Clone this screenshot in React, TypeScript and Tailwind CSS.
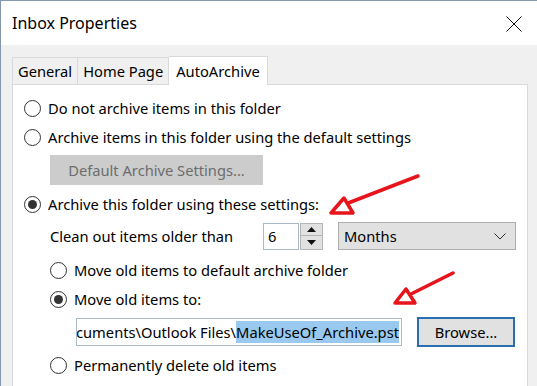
import React from "react";

const font = { fontFamily: '"Noto Sans", "Liberation Sans", sans-serif' };

function Radio({ checked, label }: { checked?: boolean; label: string }) {
  return (
    <div className="flex items-center h-[29px]">
      <div className="w-[17px] h-[17px] rounded-full border border-[#333333] bg-white flex items-center justify-center shrink-0">
        {checked && <div className="w-[9px] h-[9px] rounded-full bg-[#333333]" />}
      </div>
      <span className="ml-[7px] text-[14.7px] text-black whitespace-nowrap">{label}</span>
    </div>
  );
}

export default function App() {
  return (
    <div
      className="relative w-[537px] h-[386px] overflow-hidden bg-[#f0f0f0] border-l border-t border-[#8497ad]"
      style={font}
    >
      {/* Title bar */}
      <div className="h-[44px] bg-white flex items-center justify-between pl-[11px] pr-[15px]">
        <span className="text-[16px] text-black">Inbox Properties</span>
        <svg width="16" height="16" viewBox="0 0 16 16" className="mt-[1px]">
          <path d="M0.5 0.5 L15.5 15.5 M15.5 0.5 L0.5 15.5" stroke="#111" strokeWidth="1" fill="none" />
        </svg>
      </div>

      <div className="pl-[11px] pt-[10px]">
        {/* Tabs */}
        <div className="flex items-end h-[29px]">
          <div className="h-[27px] px-[5px] border border-b-0 border-[#d9d9d9] bg-[#f0f0f0] flex items-center text-[14.7px]">
            General
          </div>
          <div className="h-[27px] px-[5px] border border-b-0 border-l-0 border-[#d9d9d9] bg-[#f0f0f0] flex items-center text-[14.7px]">
            Home Page
          </div>
          <div className="h-[29px] px-[7px] border border-b-0 border-l-0 border-[#d9d9d9] bg-white flex items-center text-[14.7px] relative z-10 -mb-[1px]">
            AutoArchive
          </div>
        </div>

        {/* Panel */}
        <div className="w-[516px] h-[320px] bg-white border border-[#d9d9d9] pl-[11px] pt-[9px]">
          <Radio label="Do not archive items in this folder" />
          <Radio label="Archive items in this folder using the default settings" />
          <div className="ml-[26px] mt-[3px] w-[213px] h-[30px] bg-[#cccccc] flex items-center justify-center text-[14.7px] text-[#6d6d6d]">
            Default Archive Settings...
          </div>
          <div className="mt-[5px]">
            <Radio checked label="Archive this folder using these settings:" />
          </div>

          <div className="ml-[26px] mt-[3px] flex items-center h-[28px]">
            <span className="w-[213px] text-[14.7px]">Clean out items older than</span>
            <div className="w-[36px] h-[27px] border border-[#a9b8c9] bg-white flex items-center pl-[4px] text-[14.7px]">
              6
            </div>
            <div className="ml-[1px] w-[23px] h-[27px] flex flex-col">
              <div className="h-[13px] bg-[#e1e1e1] border border-[#b5b5b5] flex items-center justify-center">
                <svg width="9" height="5" viewBox="0 0 9 5"><path d="M0 5 L4.5 0 L9 5 Z" fill="#111" /></svg>
              </div>
              <div className="h-[14px] bg-[#e1e1e1] border border-t-0 border-[#b5b5b5] flex items-center justify-center">
                <svg width="9" height="5" viewBox="0 0 9 5"><path d="M0 0 L4.5 5 L9 0 Z" fill="#111" /></svg>
              </div>
            </div>
            <div className="ml-[15px] w-[178px] h-[28px] bg-[#e1e1e1] border border-[#adadad] flex items-center justify-between pl-[5px] pr-[9px] text-[14.7px]">
              <span>Months</span>
              <svg width="12" height="7" viewBox="0 0 12 7">
                <path d="M0.5 0.5 L6 6 L11.5 0.5" stroke="#333" strokeWidth="1" fill="none" />
              </svg>
            </div>
          </div>

          <div className="ml-[26px] mt-[6px]">
            <Radio label="Move old items to default archive folder" />
            <Radio checked label="Move old items to:" />
            <div className="mt-[4px] flex items-center h-[28px]">
              <div className="ml-[26px] w-[326px] h-[28px] border border-[#a9b8c9] bg-white flex items-center justify-end overflow-hidden pr-[2px] text-[14.7px] whitespace-nowrap">
                <span>C:\Users\user\Documents\Outlook Files\</span>
                <span className="bg-[#99c9ef]">MakeUseOf_Archive.pst</span>
              </div>
              <div className="ml-[15px] w-[98px] h-[30px] bg-[#e1e1e1] border-2 border-[#2a6db0] flex items-center justify-center text-[14.7px]">
                Browse...
              </div>
            </div>
            <div className="mt-[5px]">
              <Radio label="Permanently delete old items" />
            </div>
          </div>
        </div>
      </div>

      {/* Red arrows annotation */}
      <svg className="absolute top-0 left-0 pointer-events-none" width="537" height="386" viewBox="0 0 537 386">
        <g stroke="#e8141b" strokeWidth="3.5" fill="none" strokeLinejoin="round" strokeLinecap="round">
          <path d="M417 175 L342 204" />
          <path d="M330 212 L343 197 L352 212 Z" fill="#ffffff" />
          <path d="M452 272 L408 294" />
          <path d="M394 302 L405 288 L414 302 Z" fill="#ffffff" />
        </g>
      </svg>
    </div>
  );
}
